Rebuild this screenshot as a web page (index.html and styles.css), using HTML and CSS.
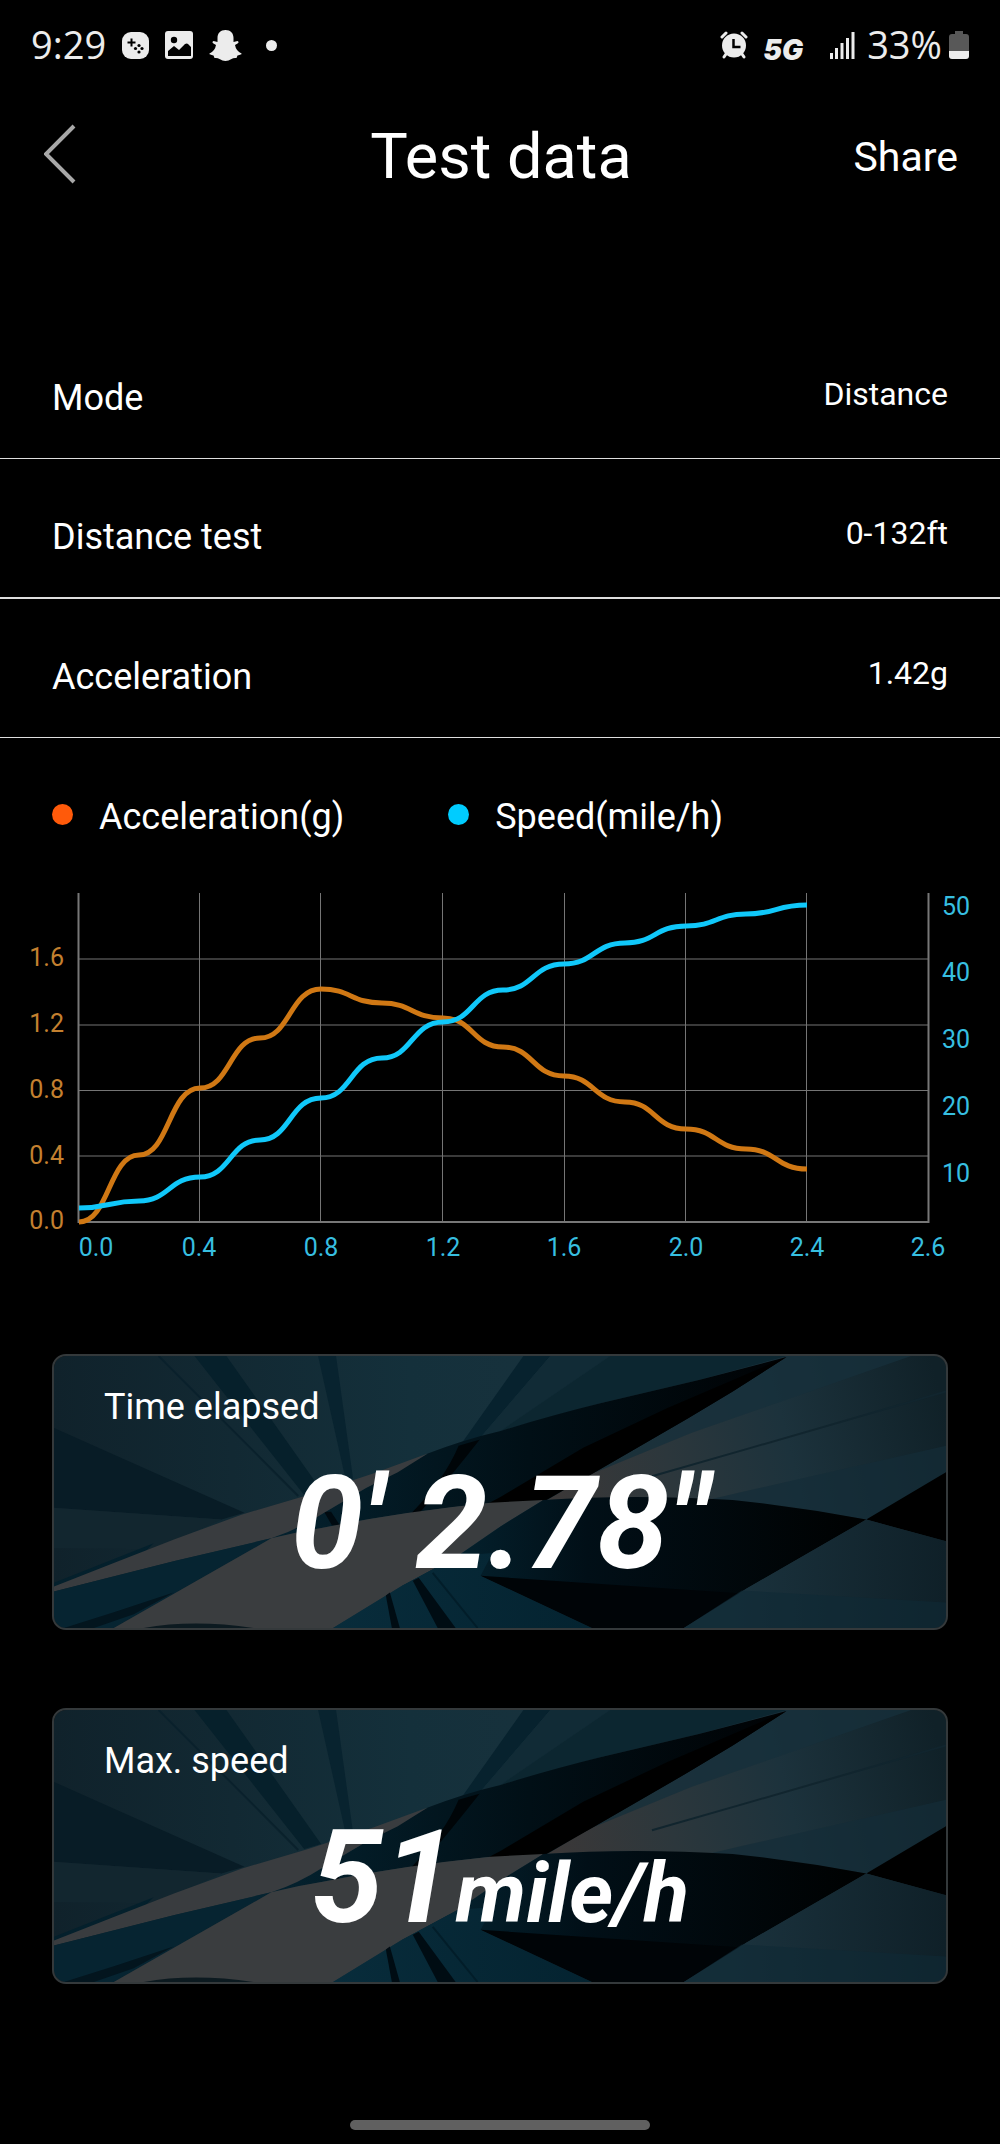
FILE: index.html
```html
<!DOCTYPE html>
<html lang="en">
<head>
    <meta charset="UTF-8">
    <meta name="viewport" content="width=device-width, initial-scale=1.0">
    <title>Test data</title>
    <link rel="stylesheet" href="styles.css">
</head>
<body>
    <div class="status-bar">
        <div class="status-left">
            <span class="clock">9:29</span>
            <svg width="27" height="27" viewBox="0 0 27 27">
                <rect width="27" height="27" rx="9" fill="#ececec"/>
                <path d="M9.500 6.500v8M5.500 10.500h8" stroke="#000" stroke-width="2"/>
                <g fill="#000"><circle cx="17" cy="13.500" r="1.600"/><circle cx="13.500" cy="16.500" r="1.600"/><circle cx="20" cy="16.500" r="1.600"/><circle cx="17" cy="20" r="1.600"/></g>
            </svg>
            <svg width="28" height="28" viewBox="0 0 28 28">
                <rect width="28" height="28" rx="3" fill="#ececec"/>
                <circle cx="9" cy="9" r="3.200" fill="#000"/>
                <path d="M3 25v-5l6-5 5 4 6-6q2-1 3 0l3 3v9z" fill="#000"/>
            </svg>
            <svg width="33" height="31" viewBox="0 0 33 31">
                <path d="M16.500 0c5 0 8 3 8 8v4l4-1q2 1 0 2.500l-2.500 1.500q1 6 6.500 8.500 1 1-4 2l-1 2.500q-3-.5-5 1-3 2-6 2t-6-2q-2-1.500-5-1l-1-2.500q-5-1-4-2 5.500-2.500 6.500-8.500l-2.500-1.500q-2-1.500 0-2.500l4 1v-4c0-5 3-8 8-8z" fill="#ececec"/>
            </svg>
            <span class="more-dot"></span>
        </div>
        <div class="status-right">
            <svg width="28" height="28" viewBox="0 0 28 28">
                <g fill="none" stroke="#ececec" stroke-width="3" stroke-linecap="round">
                    <path d="M2 6l4-4M26 6l-4-4M6 23l-2 3M22 23l2 3"/>
                </g>
                <circle cx="14" cy="14.500" r="12" fill="#ececec"/>
                <path d="M13.500 8v8h7" fill="none" stroke="#000" stroke-width="2.500"/>
            </svg>
            <span class="network">5G</span>
            <svg class="signal" width="25" height="27" viewBox="0 0 25 27">
                <path d="M1.500 21v6M6.500 16v11M12 11v16M17.500 6v21M23 0v27" stroke="#ececec" stroke-width="3"/>
            </svg>
            <span class="battery-text">33%</span>
            <svg width="20" height="28" viewBox="0 0 20 28">
                <path d="M6 0h8v3h3q3 0 3 3v14h-20v-14q0-3 3-3h3z" fill="#585858"/>
                <path d="M0 20h20v5q0 3-3 3h-14q-3 0-3-3z" fill="#ececec"/>
            </svg>
        </div>
    </div>

    <header class="header">
        <button class="back" aria-label="Back">
            <svg width="32" height="60" viewBox="0 0 32 60">
                <path d="M30 2L2 30l28 28" fill="none" stroke="#a8a8a8" stroke-width="4"/>
            </svg>
        </button>
        <h1>Test data</h1>
        <button class="share">Share</button>
    </header>

    <main>
        <dl class="details">
            <div class="row">
                <dt>Mode</dt>
                <dd>Distance</dd>
            </div>
            <div class="row">
                <dt>Distance test</dt>
                <dd>0-132ft</dd>
            </div>
            <div class="row">
                <dt>Acceleration</dt>
                <dd>1.42g</dd>
            </div>
        </dl>

        <div class="legend">
            <span class="legend-item"><i class="dot dot-accel"></i>Acceleration(g)</span>
            <span class="legend-item"><i class="dot dot-speed"></i>Speed(mile/h)</span>
        </div>

        <svg class="chart" viewBox="0 0 1000 390" role="img" aria-label="Acceleration and speed over time">
            <path class="grid" d="M199.500 13V342M320.500 13V342M442.500 13V342M564.500 13V342M685.500 13V342M806.500 13V342M79 79H929M79 145H929M79 210.500H929M79 276H929"/>
            <path class="axis" d="M78.500 13V342H928.500V13"/>

            <path class="line line-accel" d="M79 342C109 342 109 275 139 275C169 275 169 208 200 208C230 208 230 158 260 158C290 158 290 109 321 109C351 109 351 123 382 123C412 123 412 138 443 138C473 138 473 167 503 167C533 167 533 196 564 196C594 196 594 222 625 222C655 222 655 249 686 249C716 249 716 269 746 269C776 269 776 289 807 289"/>
            <path class="line line-speed" d="M79 328C109 328 109 321 139 321C169 321 169 297 200 297C230 297 230 260 260 260C290 260 290 218 321 218C351 218 351 178 382 178C412 178 412 142 443 142C473 142 473 110 503 110C533 110 533 84 564 84C594 84 594 63 625 63C655 63 655 46 686 46C716 46 716 34 746 34C776 34 776 25 807 25"/>

            <g class="label-accel">
                <text x="64" y="86">1.6</text>
                <text x="64" y="152">1.2</text>
                <text x="64" y="218">0.8</text>
                <text x="64" y="284">0.4</text>
                <text x="64" y="349">0.0</text>
            </g>
            <g class="label-speed">
                <text x="942" y="35">50</text>
                <text x="942" y="101">40</text>
                <text x="942" y="168">30</text>
                <text x="942" y="235">20</text>
                <text x="942" y="302">10</text>
            </g>
            <g class="label-time">
                <text x="96" y="376">0.0</text>
                <text x="199" y="376">0.4</text>
                <text x="321" y="376">0.8</text>
                <text x="443" y="376">1.2</text>
                <text x="564" y="376">1.6</text>
                <text x="686" y="376">2.0</text>
                <text x="807" y="376">2.4</text>
                <text x="928" y="376">2.6</text>
            </g>
        </svg>

        <section class="card">
            <svg class="card-art" viewBox="0 0 895 276" preserveAspectRatio="none" aria-hidden="true">
                <defs>
                    <linearGradient id="sky" gradientUnits="userSpaceOnUse" x1="0" x2="895" y1="0" y2="0">
                        <stop offset="0" stop-color="#10222b"/>
                        <stop offset="0.400" stop-color="#14303b"/>
                        <stop offset="0.750" stop-color="#1b333e"/>
                        <stop offset="1" stop-color="#0f2028"/>
                    </linearGradient>
                    <linearGradient id="flag" x1="0" x2="1" y1="0" y2="0">
                        <stop offset="0" stop-color="#04222f"/>
                        <stop offset="0.500" stop-color="#010f16"/>
                        <stop offset="1" stop-color="#000204"/>
                    </linearGradient>
                    <linearGradient id="deep" x1="0" x2="1" y1="0" y2="0">
                        <stop offset="0" stop-color="#052836"/>
                        <stop offset="0.400" stop-color="#010f17"/>
                        <stop offset="1" stop-color="#000101"/>
                    </linearGradient>
                    <linearGradient id="glow" gradientUnits="userSpaceOnUse" x1="500" y1="140" x2="890" y2="40">
                        <stop offset="0" stop-color="#3b3838"/>
                        <stop offset="0.300" stop-color="#2c373c"/>
                        <stop offset="0.600" stop-color="#1c323c"/>
                        <stop offset="1" stop-color="#102128"/>
                    </linearGradient>
                    <linearGradient id="lower" gradientUnits="userSpaceOnUse" x1="280" y1="0" x2="540" y2="0">
                        <stop offset="0" stop-color="#082c3b"/>
                        <stop offset="1" stop-color="#042330"/>
                    </linearGradient>
                </defs>
                <g id="art">
                    <rect width="895" height="276" fill="url(#sky)"/>
                    <!-- rays behind the flag -->
                    <path d="M0 73L191 159L168 166L0 154z" fill="#081c26"/>
                    <path d="M0 154L168 166L100 196L0 195z" fill="#12262f"/>
                    <path d="M141 0h32L268 136L251 141z" fill="#06202b"/>
                    <path d="M265 0h18L300 124L293 127z" fill="#08232f"/>
                    <path d="M471 0h27L425 86L408 90z" fill="#07222e"/>
                    <path d="M105 0L245 142" stroke="#0a212c" stroke-width="2"/>
                    <path d="M498 0h60L448 76L425 86z" fill="#112b36"/>
                    <path d="M558 0H735L648 24L548 48L448 76z" fill="#0c2630"/>
                    <!-- right side streaks -->
                    <path d="M735 0L495 146L581 143L681 146L748 154L815 166L895 118V0z" fill="url(#glow)"/>
                    <path d="M735 0L541 119L640 78L860 0z" fill="#17303b" fill-opacity="0.800"/>
                    <path d="M895 36L700 93L600 122" fill="none" stroke="#11252e" stroke-width="2"/>
                    <path d="M895 91L690 138L660 145L748 154L815 166L895 118z" fill="#142c37" fill-opacity="0.700"/>
                    <!-- flag -->
                    <path d="M218 185L271 159L313 134L375 99Q410 85 448 76Q500 60 548 48L648 24L735 1L681 36L635 64L541 119L491 146L438 149Q340 160 271 174z" fill="url(#flag)"/>
                    <path d="M735 1L615 53L531 93L448 143L435 150L493 147L541 119L635 64L681 36z" fill="#000"/>
                    <path d="M427 85L406 91Q392 125 358 160L366 160Q400 120 427 85z" fill="#000508"/>
                    <path d="M271 158h7L287 172h-8z" fill="#000a10"/>
                    <path d="M0 230L100 190L90 200L0 236z" fill="#04202c"/>
                    <path d="M0 234Q60 210 121 186L188 161L255 141L321 119L375 99L345 118L313 134L271 159Q245 176 218 185L121 208L0 239z" fill="#393c3f"/>
                    <path d="M0 239L121 208L218 185L60 276H0z" fill="#062431"/>
                    <path d="M10 276L60 260L120 240L80 262L40 276z" fill="#03151e"/>
                    <path d="M218 185Q245 178 271 174Q350 158 438 149L491 146L448 173L405 203L348 234L280 276H60z" fill="#3a3d3f"/>
                    <path d="M90 276Q140 267 200 276z" fill="#0c1a20"/>
                    <path d="M491 146Q581 140 681 146Q748 153 815 166L695 236L632 276H540L428 223L348 234L405 203L448 173z" fill="url(#deep)"/>
                    <path d="M280 276L348 234L405 203L440 200L428 223L540 276z" fill="url(#lower)"/>
                    <path d="M428 223L515 229L690 241L632 276H540z" fill="#000407"/>
                    <path d="M333 243l4-3L347 276h-8z" fill="#000c13"/>
                    <path d="M360 228l6-3L403 276h-18z" fill="#000c13"/>
                    <path d="M380 220L425 276" stroke="#021d29" stroke-width="2"/>
                    <path d="M815 166L895 118V188z" fill="#000"/>
                    <path d="M815 166L895 188V276H632L695 236z" fill="url(#sky)"/>
                    <path d="M690 238L895 250V276H632z" fill="#0f2a36" fill-opacity="0.600"/>
                </g>
            </svg>
            <h2>Time elapsed</h2>
            <p class="result">0' 2.78"</p>
        </section>

        <section class="card">
            <svg class="card-art" viewBox="0 0 895 276" preserveAspectRatio="none" aria-hidden="true">
                <use href="#art"/>
            </svg>
            <h2>Max. speed</h2>
            <p class="result">51<span class="unit">mile/h</span></p>
        </section>
    </main>

    <div class="home-bar"></div>
</body>
</html>
```

FILE: styles.css
```css
* {
    box-sizing: border-box;
}
body {
    margin: 0;
    min-height: 100vh;
    display: flex;
    flex-direction: column;
    background: #000;
    color: #fff;
    font-family: Roboto, Arial, sans-serif;
}
h1, h2, p, dl, dd {
    margin: 0;
    font-weight: normal;
}
button {
    background: none;
    border: none;
    padding: 0;
    color: inherit;
    font-family: inherit;
    cursor: pointer;
}
svg {
    display: block;
}

/* status bar */
.status-bar {
    height: 90px;
    padding: 0 31px;
    display: flex;
    justify-content: space-between;
    align-items: center;
    color: #ececec;
    font-family: "Open Sans", sans-serif;
    font-size: 38px;
    line-height: 44px;
}
.status-left {
    display: flex;
    align-items: center;
    gap: 16px;
}
.status-right {
    display: flex;
    align-items: center;
    gap: 7px;
}
.clock,
.battery-text {
    margin-bottom: 2px;
}
.more-dot {
    width: 11px;
    height: 11px;
    margin-left: 8px;
    border-radius: 50%;
    background: #ececec;
}
.network {
    margin: 10px 20px 0 8px;
    font-family: Inter, sans-serif;
    font-size: 28px;
    font-weight: 900;
    font-style: italic;
    line-height: 30px;
}
.signal {
    margin-right: 5px;
}

/* title bar */
.header {
    display: grid;
    grid-template-columns: 1fr auto 1fr;
    align-items: center;
    padding: 28px 42px 0 44px;
}
.header h1 {
    font-size: 63px;
    line-height: 78px;
}
.back {
    justify-self: start;
    margin-bottom: 6px;
}
.share {
    justify-self: end;
    font-size: 41px;
    line-height: 48px;
}

/* details */
.details {
    margin-top: 124px;
}
.row {
    display: flex;
    justify-content: space-between;
    align-items: flex-start;
    padding: 57px 52px 39px;
    border-bottom: 1px solid #dedede;
}
.row:nth-child(2) {
    border-bottom-width: 2px;
}
.row dt {
    font-size: 36px;
    line-height: 42px;
}
.row dd {
    font-size: 32px;
    line-height: 34px;
}

/* chart */
.legend {
    display: flex;
    gap: 104px;
    padding: 58px 52px 42px;
    font-size: 36px;
    line-height: 42px;
}
.legend-item {
    display: flex;
    align-items: center;
    gap: 26px;
}
.dot {
    width: 21px;
    height: 21px;
    margin-bottom: 6px;
    border-radius: 50%;
}
.dot-accel {
    background: #ff5a0a;
}
.dot-speed {
    background: #00ccff;
}
.chart {
    width: 100%;
    height: auto;
    font-size: 25px;
}
.grid {
    fill: none;
    stroke: #757575;
    stroke-width: 1;
}
.axis {
    fill: none;
    stroke: #777;
    stroke-width: 2;
}
.line {
    fill: none;
    stroke-width: 5;
}
.line-accel {
    stroke: #d07814;
}
.line-speed {
    stroke: #10c8fa;
}
.label-accel {
    fill: #c4802f;
    text-anchor: end;
}
.label-speed {
    fill: #37bfe0;
}
.label-time {
    fill: #37bfe0;
    text-anchor: middle;
}

/* result cards */
.card {
    position: relative;
    margin: 84px 52px 0;
    padding: 30px 50px 39px;
    border: 2px solid #34393b;
    border-radius: 14px;
    overflow: hidden;
}
.card + .card {
    margin-top: 78px;
}
.card-art {
    position: absolute;
    inset: 0;
    width: 100%;
    height: 100%;
    z-index: -1;
}
.card h2 {
    font-size: 36px;
    line-height: 42px;
}
.result {
    margin-top: 31px;
    font-size: 130px;
    font-weight: bold;
    font-style: italic;
    line-height: 130px;
    text-align: center;
}
.unit {
    font-size: 84px;
    line-height: 84px;
}

.home-bar {
    width: 30%;
    height: 10px;
    margin: auto auto 14px;
    border-radius: 5px;
    background: #606060;
}
```
